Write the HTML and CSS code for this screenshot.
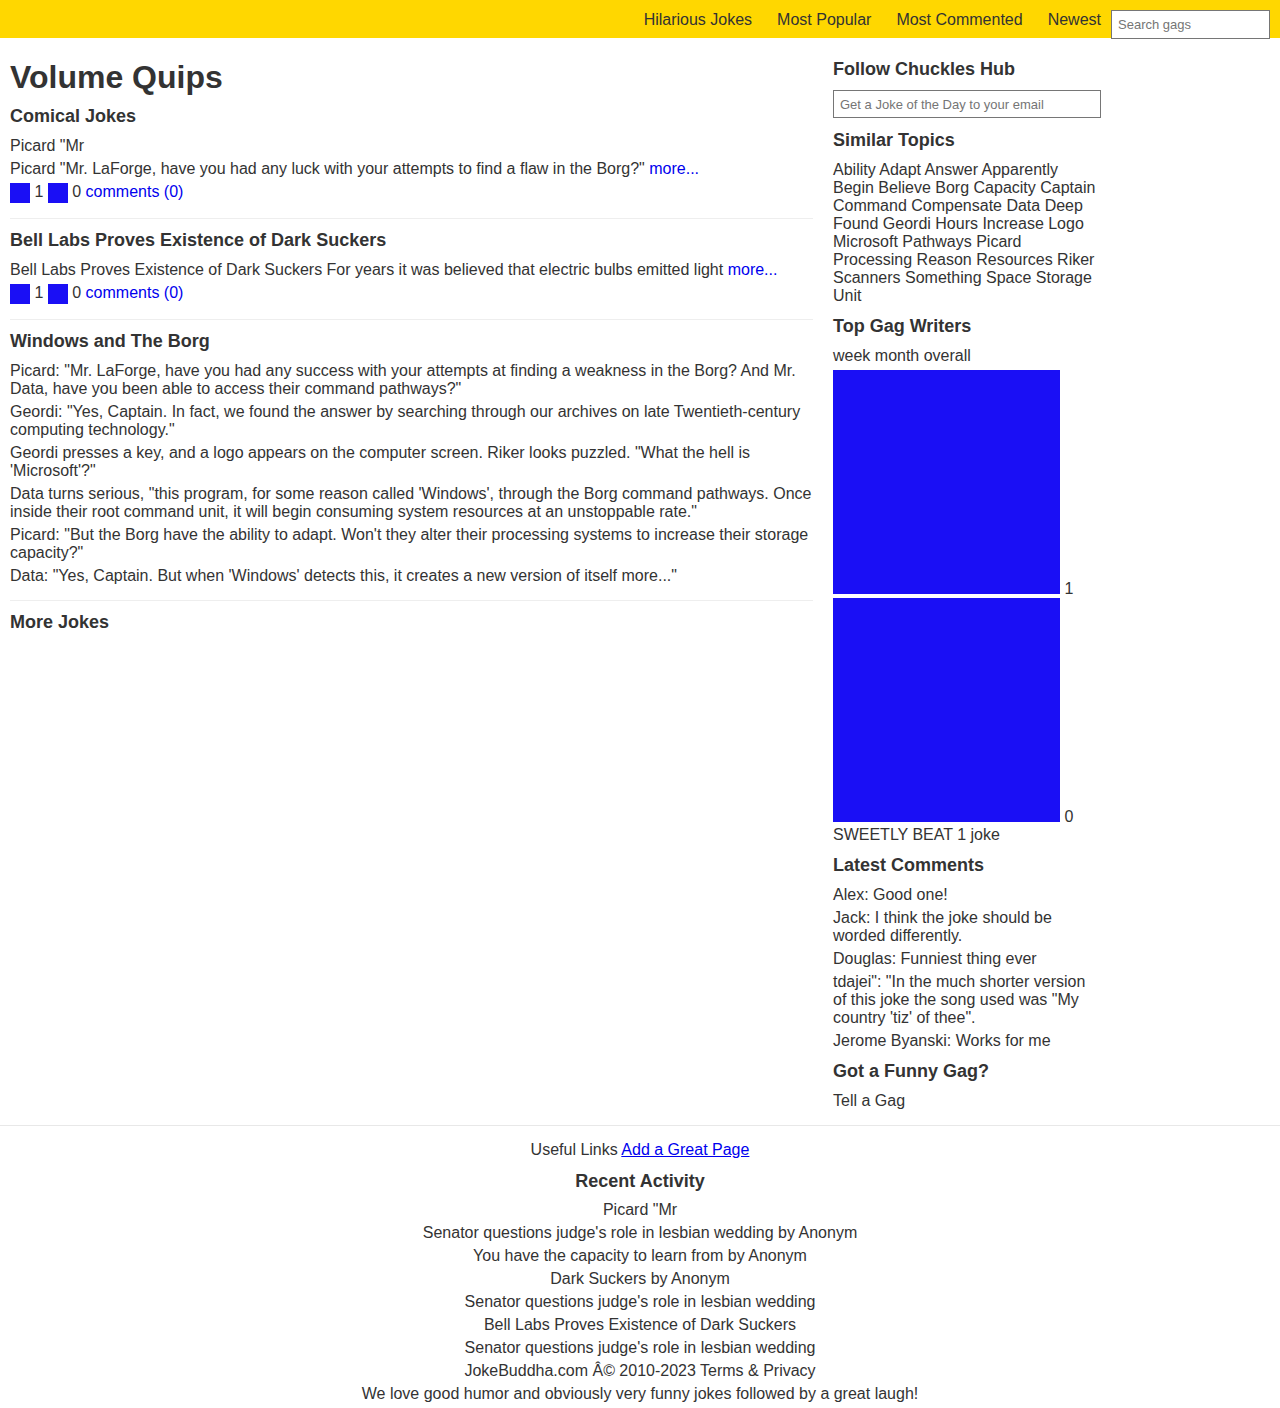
FILE: index.html
```html
<!DOCTYPE html>
<html lang="en">
<head>
<meta charset="utf-8">
<title>Volume Quips</title>
<link rel="stylesheet" href="styles.css">
</head>
<body>
<header class="topbar">
  <nav class="nav">
    <a href="#">Hilarious Jokes</a>
    <a href="#">Most Popular</a>
    <a href="#">Most Commented</a>
    <a href="#">Newest</a>
  </nav>
  <input class="search" type="text" placeholder="Search gags">
</header>

<div class="layout">
  <main class="main">
    <h1 class="title">Volume Quips</h1>

    <article class="joke">
      <h2 class="heading">Comical Jokes</h2>
      <p>Picard "Mr</p>
      <p>Picard "Mr. LaForge, have you had any luck with your attempts to find a flaw in the Borg?" <a href="#">more...</a></p>
      <div class="votes"><span class="vbox"></span> 1 <span class="vbox"></span> 0 <a href="#">comments (0)</a></div>
    </article>

    <article class="joke">
      <h2 class="heading">Bell Labs Proves Existence of Dark Suckers</h2>
      <p>Bell Labs Proves Existence of Dark Suckers For years it was believed that electric bulbs emitted light <a href="#">more...</a></p>
      <div class="votes"><span class="vbox"></span> 1 <span class="vbox"></span> 0 <a href="#">comments (0)</a></div>
    </article>

    <article class="joke">
      <h2 class="heading">Windows and The Borg</h2>
      <p>Picard: "Mr. LaForge, have you had any success with your attempts at finding a weakness in the Borg? And Mr. Data, have you been able to access their command pathways?"</p>
      <p>Geordi: "Yes, Captain. In fact, we found the answer by searching through our archives on late Twentieth-century computing technology."</p>
      <p>Geordi presses a key, and a logo appears on the computer screen. Riker looks puzzled. "What the hell is 'Microsoft'?"</p>
      <p>Data turns serious, "this program, for some reason called 'Windows', through the Borg command pathways. Once inside their root command unit, it will begin consuming system resources at an unstoppable rate."</p>
      <p>Picard: "But the Borg have the ability to adapt. Won't they alter their processing systems to increase their storage capacity?"</p>
      <p>Data: "Yes, Captain. But when 'Windows' detects this, it creates a new version of itself more..."</p>
    </article>

    <h2 class="heading">More Jokes</h2>
  </main>

  <aside class="side">
    <h2 class="heading">Follow Chuckles Hub</h2>
    <input class="email" type="text" placeholder="Get a Joke of the Day to your email">

    <h2 class="heading">Similar Topics</h2>
    <p class="topics">Ability Adapt Answer Apparently Begin Believe Borg Capacity Captain Command Compensate Data Deep Found Geordi Hours Increase Logo Microsoft Pathways Picard Processing Reason Resources Riker Scanners Something Space Storage Unit</p>

    <h2 class="heading">Top Gag Writers</h2>
    <div class="periods">week month overall</div>
    <div class="writer"><span class="avatar"></span> 1</div>
    <div class="writer"><span class="avatar"></span> 0</div>
    <div class="writer-name">SWEETLY BEAT 1 joke</div>

    <h2 class="heading">Latest Comments</h2>
    <p>Alex: Good one!</p>
    <p>Jack: I think the joke should be worded differently.</p>
    <p>Douglas: Funniest thing ever</p>
    <p>tdajei": "In the much shorter version of this joke the song used was "My country 'tiz' of thee".</p>
    <p>Jerome Byanski: Works for me</p>

    <h2 class="heading">Got a Funny Gag?</h2>
    <p>Tell a Gag</p>
  </aside>
</div>

<footer class="footer">
  <p>Useful Links <a class="ul" href="#">Add a Great Page</a></p>
  <h2 class="heading">Recent Activity</h2>
  <p>Picard "Mr</p>
  <p>Senator questions judge's role in lesbian wedding by Anonym</p>
  <p>You have the capacity to learn from by Anonym</p>
  <p>Dark Suckers by Anonym</p>
  <p>Senator questions judge's role in lesbian wedding</p>
  <p>Bell Labs Proves Existence of Dark Suckers</p>
  <p>Senator questions judge's role in lesbian wedding</p>
  <p>JokeBuddha.com Â© 2010-2023 Terms &amp; Privacy</p>
  <p>We love good humor and obviously very funny jokes followed by a great laugh!</p>
</footer>
</body>
</html>
```

FILE: styles.css
```css
* { box-sizing: border-box; }

body {
  margin: 0;
  font-family: "Liberation Sans", Arial, sans-serif;
  font-size: 16px;
  line-height: 18px;
  color: #333;
  background: #fff;
}

a { color: #0000ee; text-decoration: none; }
a.ul { text-decoration: underline; }

p { margin: 0 0 5px; }

.topbar {
  height: 38px;
  background: #ffd700;
  display: flex;
  justify-content: flex-end;
  align-items: flex-start;
  padding: 0 10px;
}

.nav {
  display: flex;
  gap: 25px;
  height: 38px;
  padding-top: 2px;
  align-items: center;
}

.nav a { color: #333; }

.search {
  margin: 10px 0 0 10px;
  width: 159px;
  height: 29px;
  border: 1px solid #767676;
  padding: 0 6px;
  font-family: "Liberation Sans", Arial, sans-serif;
  font-size: 13px;
  background: #fff;
}

.search::placeholder, .email::placeholder { color: #757575; }

.layout {
  width: 1101px;
  padding: 21px 0 0 10px;
  display: grid;
  grid-template-columns: 3fr 1fr;
  column-gap: 20px;
}

.title {
  margin: 0;
  font-size: 32px;
  line-height: 37px;
  font-weight: bold;
}

.heading {
  margin: 10px 0;
  font-size: 18px;
  line-height: 21px;
  font-weight: bold;
}

.joke + .joke .heading,
.main > .heading { margin-top: 11px; }

.side > .heading { margin-top: 11px; }
.side > .heading:first-child { margin-top: 0; }

.joke {
  border-bottom: 1px solid #eee;
  padding-bottom: 15px;
}

.joke p:last-child { margin-bottom: 0; }

.votes {
  line-height: 18px;
  white-space: pre;
}

.vbox {
  display: inline-block;
  width: 20px;
  height: 20px;
  background: #1a0ff5;
  vertical-align: middle;
}

.email {
  display: block;
  width: 268px;
  height: 28px;
  border: 1px solid #767676;
  padding: 0 6px;
  font-family: "Liberation Sans", Arial, sans-serif;
  font-size: 13px;
  margin-bottom: 12px;
}

.topics { margin-bottom: 0; }

.periods { margin-bottom: 5px; }

.writer { line-height: 18px; }

.avatar {
  display: inline-block;
  width: 227px;
  height: 224px;
  background: #1a0ff5;
  vertical-align: baseline;
}

.footer {
  margin-top: 10px;
  border-top: 1px solid #e8e8e8;
  padding-top: 15px;
  text-align: center;
}

.footer .heading { margin: 12px 0 9px; }
```
